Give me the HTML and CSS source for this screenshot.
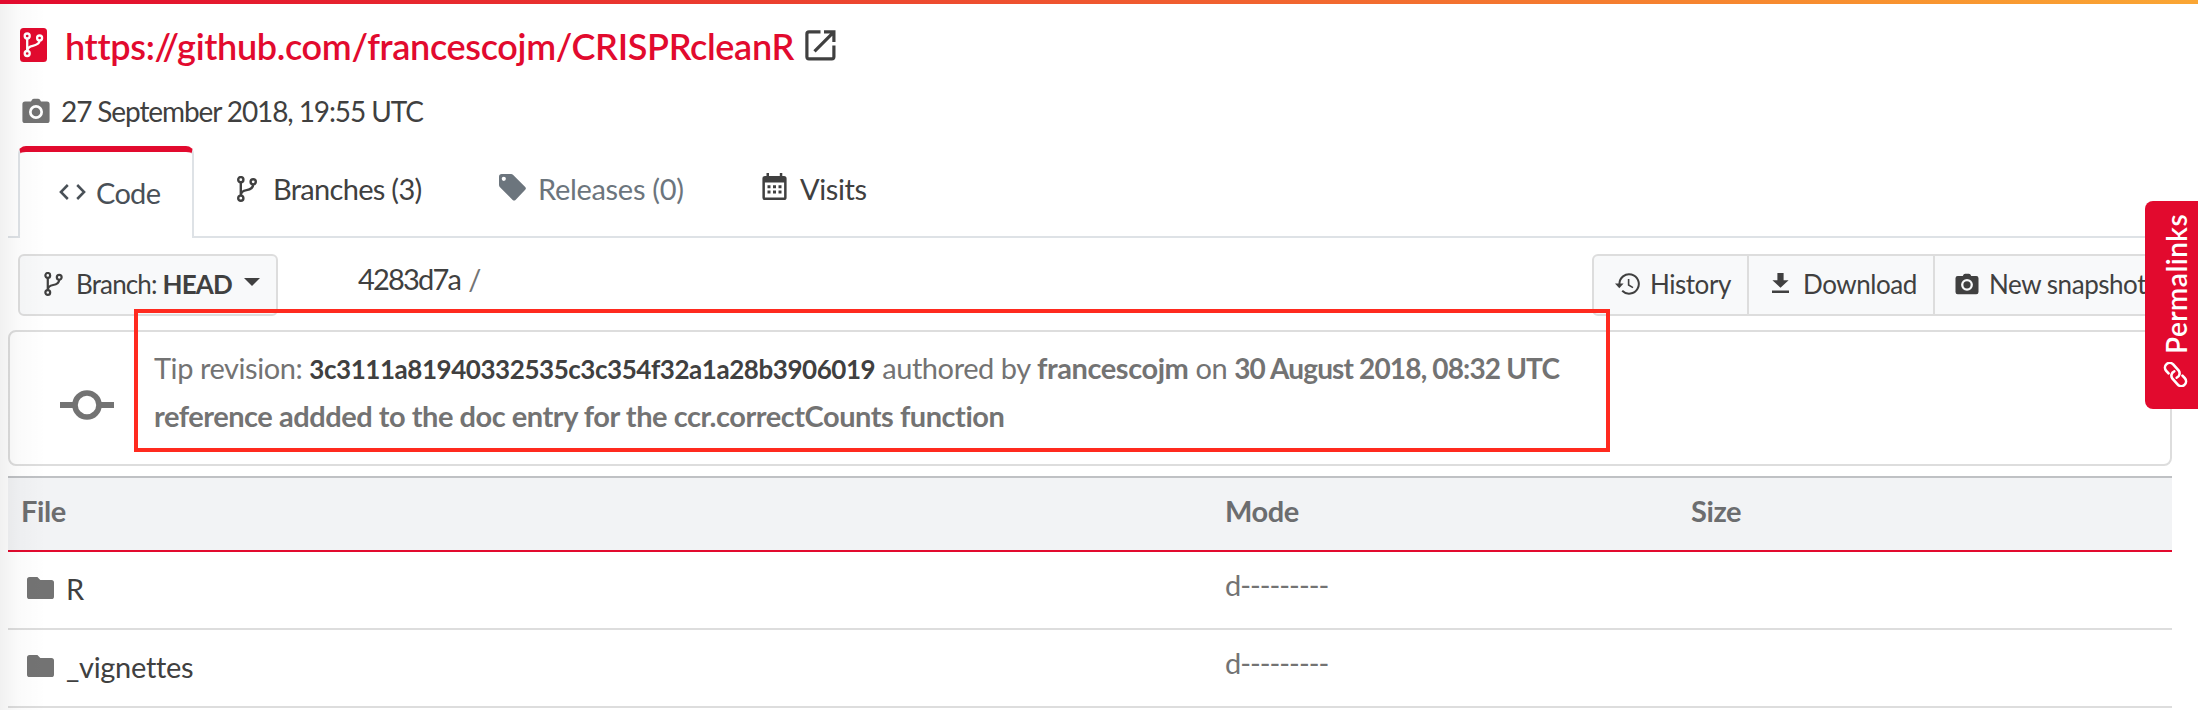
FILE: index.html
```
<!DOCTYPE html>
<html lang="en">
<head>
<meta charset="utf-8">
<title>CRISPRcleanR – browse origin</title>
<link rel="stylesheet" href="styles.css">
</head>
<body>
<svg class="defs" aria-hidden="true">
  <symbol id="branch" viewBox="0 0 20 26">
    <g fill="none" stroke="currentColor" stroke-width="2.4">
      <circle cx="3.8" cy="3.7" r="2.6"/><circle cx="3.8" cy="22.2" r="2.6"/><circle cx="16.2" cy="5.8" r="2.6"/>
      <path d="M3.8 6.2V19.6M16.2 8.4C16 12.6 12.6 13.7 9.6 14.1C5.9 14.6 4 15.8 3.8 19.4"/>
    </g>
  </symbol>
  <symbol id="camera" viewBox="0 0 28 26">
    <path fill="currentColor" fill-rule="evenodd" d="M9 3.6L10.2 1.6Q10.8 .8 12 .8H16Q17.2 .8 17.8 1.6L19 3.6H25Q27.6 3.6 27.6 6.2V22.4Q27.6 25 25 25H3Q.4 25 .4 22.4V6.2Q.4 3.600 3 3.600ZM14 7A7 7 0 1 0 14 21A7 7 0 1 0 14 7ZM14 9.700A4.300 4.300 0 1 1 14 18.300A4.300 4.300 0 1 1 14 9.700Z"/>
  </symbol>
  <symbol id="folder" viewBox="0 0 27 22">
    <path fill="currentColor" d="M2.600 0H10.400L13.300 3H24.400Q27 3 27 5.600V19.400Q27 22 24.400 22H2.600Q0 22 0 19.400V2.600Q0 0 2.600 0Z"/>
  </symbol>
</svg>
<div class="topbar"></div>
<div class="page">
  <header class="origin">
    <svg class="repo" viewBox="0 0 27 34"><rect width="27" height="34" rx="3.500" fill="#e20a2e"/>
      <g fill="none" stroke="#fff" stroke-width="2.300"><circle cx="7.200" cy="8" r="2.500"/><circle cx="7.200" cy="25.500" r="2.500"/><circle cx="19.600" cy="10" r="2.500"/><path d="M7.200 10.500V23M19.600 12.500C19.400 16.300 15.600 17.200 12.800 17.800C9.200 18.500 7.400 19.600 7.200 23"/></g></svg>
    <a class="origin-url">https://github.com/francescojm/CRISPRcleanR</a>
    <svg class="external" viewBox="0 0 31 31"><path fill="none" stroke="currentColor" stroke-width="3.200" d="M15.500 1.900H4Q1.900 1.900 1.900 4V26.800Q1.900 28.900 4 28.900H26.800Q28.900 28.900 28.900 26.800V15.500M19 1.900H28.900V12M28.400 2.400L9.500 21.300"/></svg>
  </header>
  <div class="visit"><svg class="visit-icon"><use href="#camera"/></svg><span>27 September 2018, 19:55 UTC</span></div>

  <nav class="tabs">
    <a class="tab active"><svg class="code-icon" viewBox="0 0 27 16"><path fill="none" stroke="currentColor" stroke-width="2.500" d="M8.800 1L1.900 8L8.800 15M18.200 1L25.100 8L18.200 15"/></svg><span>Code</span></a>
    <a class="tab tab-branches"><svg class="branch-icon"><use href="#branch"/></svg><span>Branches (3)</span></a>
    <a class="tab tab-releases"><svg class="tag-icon" viewBox="0 0 27 27"><path fill="currentColor" fill-rule="evenodd" d="M2.800 0H12Q13.300 0 14.200 .9L26.200 12.900Q27.600 14.300 26.200 15.700L16.500 25.900Q15.100 27.300 13.700 25.900L1 13.300Q0 12.300 0 11V2.800Q0 0 2.800 0ZM4.800 2.700A2.100 2.100 0 1 0 4.800 6.900A2.100 2.100 0 1 0 4.800 2.700Z"/></svg><span>Releases (0)</span></a>
    <a class="tab tab-visits"><svg class="cal-icon" viewBox="0 0 25 27"><path fill="currentColor" fill-rule="evenodd" d="M4.500 0H7V3H17.800V0H20.300V3H22Q24.600 3 24.600 5.600V24.400Q24.600 27 22 27H3Q.4 27 .4 24.400V5.600Q.4 3 3 3H4.500ZM2.900 9.500V24.500H22.100V9.500Z"/><path fill="currentColor" d="M5.500 12.300h3v3h-3zM11 12.300h3v3h-3zM16.500 12.300h3v3h-3zM5.500 17.400h3v3h-3zM11 17.400h3v3h-3zM16.500 17.400h3v3h-3z"/></svg><span>Visits</span></a>
  </nav>

  <div class="toolbar">
    <button class="btn branch-btn"><svg><use href="#branch"/></svg><span>Branch: <b>HEAD</b></span><i class="caret"></i></button>
    <div class="path"><a>4283d7a</a><span>/</span></div>
    <div class="group">
      <button class="btn history"><svg viewBox="0 0 25 22"><path fill="none" stroke="currentColor" stroke-width="2" d="M4.400 11.200A9.700 9.700 0 1 1 7.200 17.800"/><path fill="currentColor" d="M0 10.500H8.600L4.300 15.200Z"/><path fill="none" stroke="currentColor" stroke-width="1.600" d="M13.600 6V12L18 14.600"/></svg><span>History</span></button>
      <button class="btn download"><svg viewBox="0 0 17 20"><path fill="currentColor" d="M5.400 0H11.600V7.300H16.600L8.500 14.800L.4 7.300H5.400ZM0 17.600H17V20H0Z"/></svg><span>Download</span></button>
      <button class="btn snapshot"><svg><use href="#camera"/></svg><span>New snapshot</span></button>
    </div>
  </div>

  <section class="revision">
    <svg class="commit-icon" viewBox="0 0 54 30"><path stroke="currentColor" stroke-width="6" d="M0 15H14M40 15H54"/><circle cx="27" cy="15" r="12" fill="none" stroke="currentColor" stroke-width="5.600"/></svg>
    <div class="revision-text">
      <div class="line">Tip revision: <b class="hash">3c3111a81940332535c3c354f32a1a28b3906019</b> authored by <b>francescojm</b> on <b class="when">30 August 2018, 08:32 UTC</b></div>
      <div class="line message">reference addded to the doc entry for the ccr.correctCounts function</div>
    </div>
  </section>

  <div class="files">
    <div class="row head"><span>File</span><span>Mode</span><span>Size</span></div>
    <div class="row"><a class="name"><svg><use href="#folder"/></svg>R</a><span class="mode">d---------</span><span></span></div>
    <div class="row"><a class="name"><svg><use href="#folder"/></svg>_vignettes</a><span class="mode">d---------</span><span></span></div>
  </div>
</div>
<div class="edge-shade"></div>
<div class="highlight"></div>
<div class="permalinks"><div class="permalinks-label">
  <svg viewBox="-12.500 -12.500 25 25"><g fill="none" stroke="currentColor" stroke-width="2.600" stroke-linecap="round" transform="rotate(48)"><path d="M-5.500 4.400H-9A4.700 4.700 0 0 1 -9 -5H-1A4.700 4.700 0 0 1 3.200 1.200"/><path transform="rotate(180)" d="M-5.500 4.400H-9A4.700 4.700 0 0 1 -9 -5H-1A4.700 4.700 0 0 1 3.200 1.200"/></g></svg>
  <span>Permalinks</span></div></div>
</body>
</html>
```
FILE: styles.css
```
* { box-sizing: border-box; }
body {
  margin: 0;
  height: 710px;
  overflow: hidden;
  position: relative;
  background: #fff;
  color: #404040;
  font: 400 29px/40px Lato, "Open Sans", sans-serif;
  white-space: nowrap;
}
svg { display: block; flex: none; }
.defs { position: absolute; width: 0; height: 0; }
.topbar { height: 4px; background: linear-gradient(90deg, #e20a2e, #ee4f2f 45%, #f8912f 85%, #faa634); }
.page { width: 2172px; padding-left: 8px; }

.origin { display: flex; align-items: center; height: 48px; margin-top: 18px; padding-left: 12px; }
.repo { width: 27px; height: 34px; margin: 0 18px 2px 0; }
.origin-url { color: #e20a2e; font-size: 36px; font-weight: 600; letter-spacing: -.33px; width: 740px; }
.external { width: 31px; height: 31px; margin-bottom: 2px; }

.visit { display: flex; align-items: center; height: 40px; margin-top: 21px; padding-left: 14px; font-size: 28px; letter-spacing: -1.1px; }
.visit-icon { width: 28px; height: 26px; margin-right: 11px; color: #737373; }

.tabs { display: flex; height: 92px; margin-top: 15px; padding-left: 10px; border-bottom: 2px solid #dee2e6; letter-spacing: -.7px; }
.tab { display: flex; align-items: center; padding-bottom: 5px; }
.tab.active {
  width: 176px; height: 92px; padding: 0 0 5px 39px;
  border: 2px solid #dee2e6; border-top: 6px solid #e20a2e; border-bottom: 0;
  border-radius: 8px 8px 0 0; background: #fff; color: #495057;
}
.code-icon { width: 27px; height: 16px; margin: 0 10px 2px 0; }
.tab-branches { width: 305px; padding-left: 43px; }
.branch-icon { width: 20px; height: 26px; margin-right: 16px; }
.tab-releases { width: 263px; color: #6c757d; letter-spacing: -.3px; }
.tag-icon { width: 27px; height: 27px; margin: 0 12px 2px 0; }
.tab-visits { letter-spacing: -.4px; }
.cal-icon { width: 25px; height: 27px; margin: 0 13px 4px 0; }

.toolbar { display: flex; height: 62px; margin-top: 16px; padding-left: 10px; }
.btn {
  display: flex; align-items: center; height: 62px; padding: 0 0 2px;
  border: 2px solid #ddd; background: #f8f9fa; color: #404040;
  font: inherit; font-size: 26px; letter-spacing: -.45px;
}
.branch-btn { width: 260px; padding-left: 24px; border-radius: 6px; letter-spacing: -.85px; }
.branch-btn svg { width: 19px; height: 24px; margin-right: 13px; }
.caret { margin: 0 0 5px 12px; border: 8px solid transparent; border-top-color: currentColor; border-bottom: 0; }
.path { display: flex; align-items: center; gap: 8px; margin-left: 80px; padding-bottom: 12px; letter-spacing: -1.8px; }
.path span { color: #737373; }
.group { display: flex; margin-left: auto; }
.group .btn + .btn { margin-left: -2px; }
.history { width: 157px; padding-left: 21px; border-radius: 6px 0 0 6px; }
.history svg { width: 25px; height: 22px; margin-right: 10px; }
.download { width: 188px; padding-left: 23px; }
.download svg { width: 17px; height: 20px; margin: 0 14px 2px 0; }
.snapshot { width: 239px; padding-left: 20px; border-radius: 0 6px 6px 0; }
.snapshot svg { width: 24px; height: 22px; margin-right: 10px; }

.revision {
  display: flex; height: 136px; margin-top: 14px; padding: 12px 0 0 50px;
  border: 2px solid #ddd; border-radius: 8px; color: #737373;
}
.commit-icon { width: 54px; height: 30px; margin: 46px 40px 0 0; }
.line { height: 48px; line-height: 48px; letter-spacing: -.43px; }
.hash { color: #404040; font-size: 26px; letter-spacing: -.45px; }
.when { font-size: 28px; letter-spacing: -.85px; }
.message { font-weight: 700; letter-spacing: -.47px; }

.files { margin-top: 10px; }
.row { display: grid; grid-template-columns: 1217px 466px 1fr; align-items: center; height: 78px; border-bottom: 2px solid #ddd; }
.head { height: 76px; padding-bottom: 7px; border-top: 2px solid #bfc1c4; border-bottom-color: #e20a2e; background: #f2f3f5; color: #6c6d6f; font-weight: 700; letter-spacing: -.4px; }
.head span:first-child { padding-left: 13px; }
.name { display: flex; align-items: center; padding: 0 0 3px 19px; letter-spacing: -.3px; }
.name svg { width: 27px; height: 22px; margin: 0 12px 1px 0; color: #737373; }
.mode { padding-bottom: 10px; color: #737373; letter-spacing: -1px; }

.edge-shade { position: absolute; left: 0; top: 4px; bottom: 0; width: 46px; background: linear-gradient(90deg, rgba(0,0,0,.055), rgba(0,0,0,.02) 40%, transparent); }
.highlight { position: absolute; left: 134px; top: 309px; width: 1476px; height: 143px; border: 4px solid #ff2a1f; }
.permalinks { position: absolute; left: 2145px; top: 201px; width: 53px; height: 208px; border-radius: 8px 0 0 8px; background: #e20a2e; color: #fff; }
.permalinks-label {
  display: flex; align-items: center; width: 53px; height: 208px; padding: 22px 9px 0 0;
  writing-mode: vertical-rl; transform: rotate(180deg); font-size: 28px; font-weight: 600; letter-spacing: .5px;
}
.permalinks-label svg { width: 25px; height: 25px; margin-bottom: 8px; }
```
